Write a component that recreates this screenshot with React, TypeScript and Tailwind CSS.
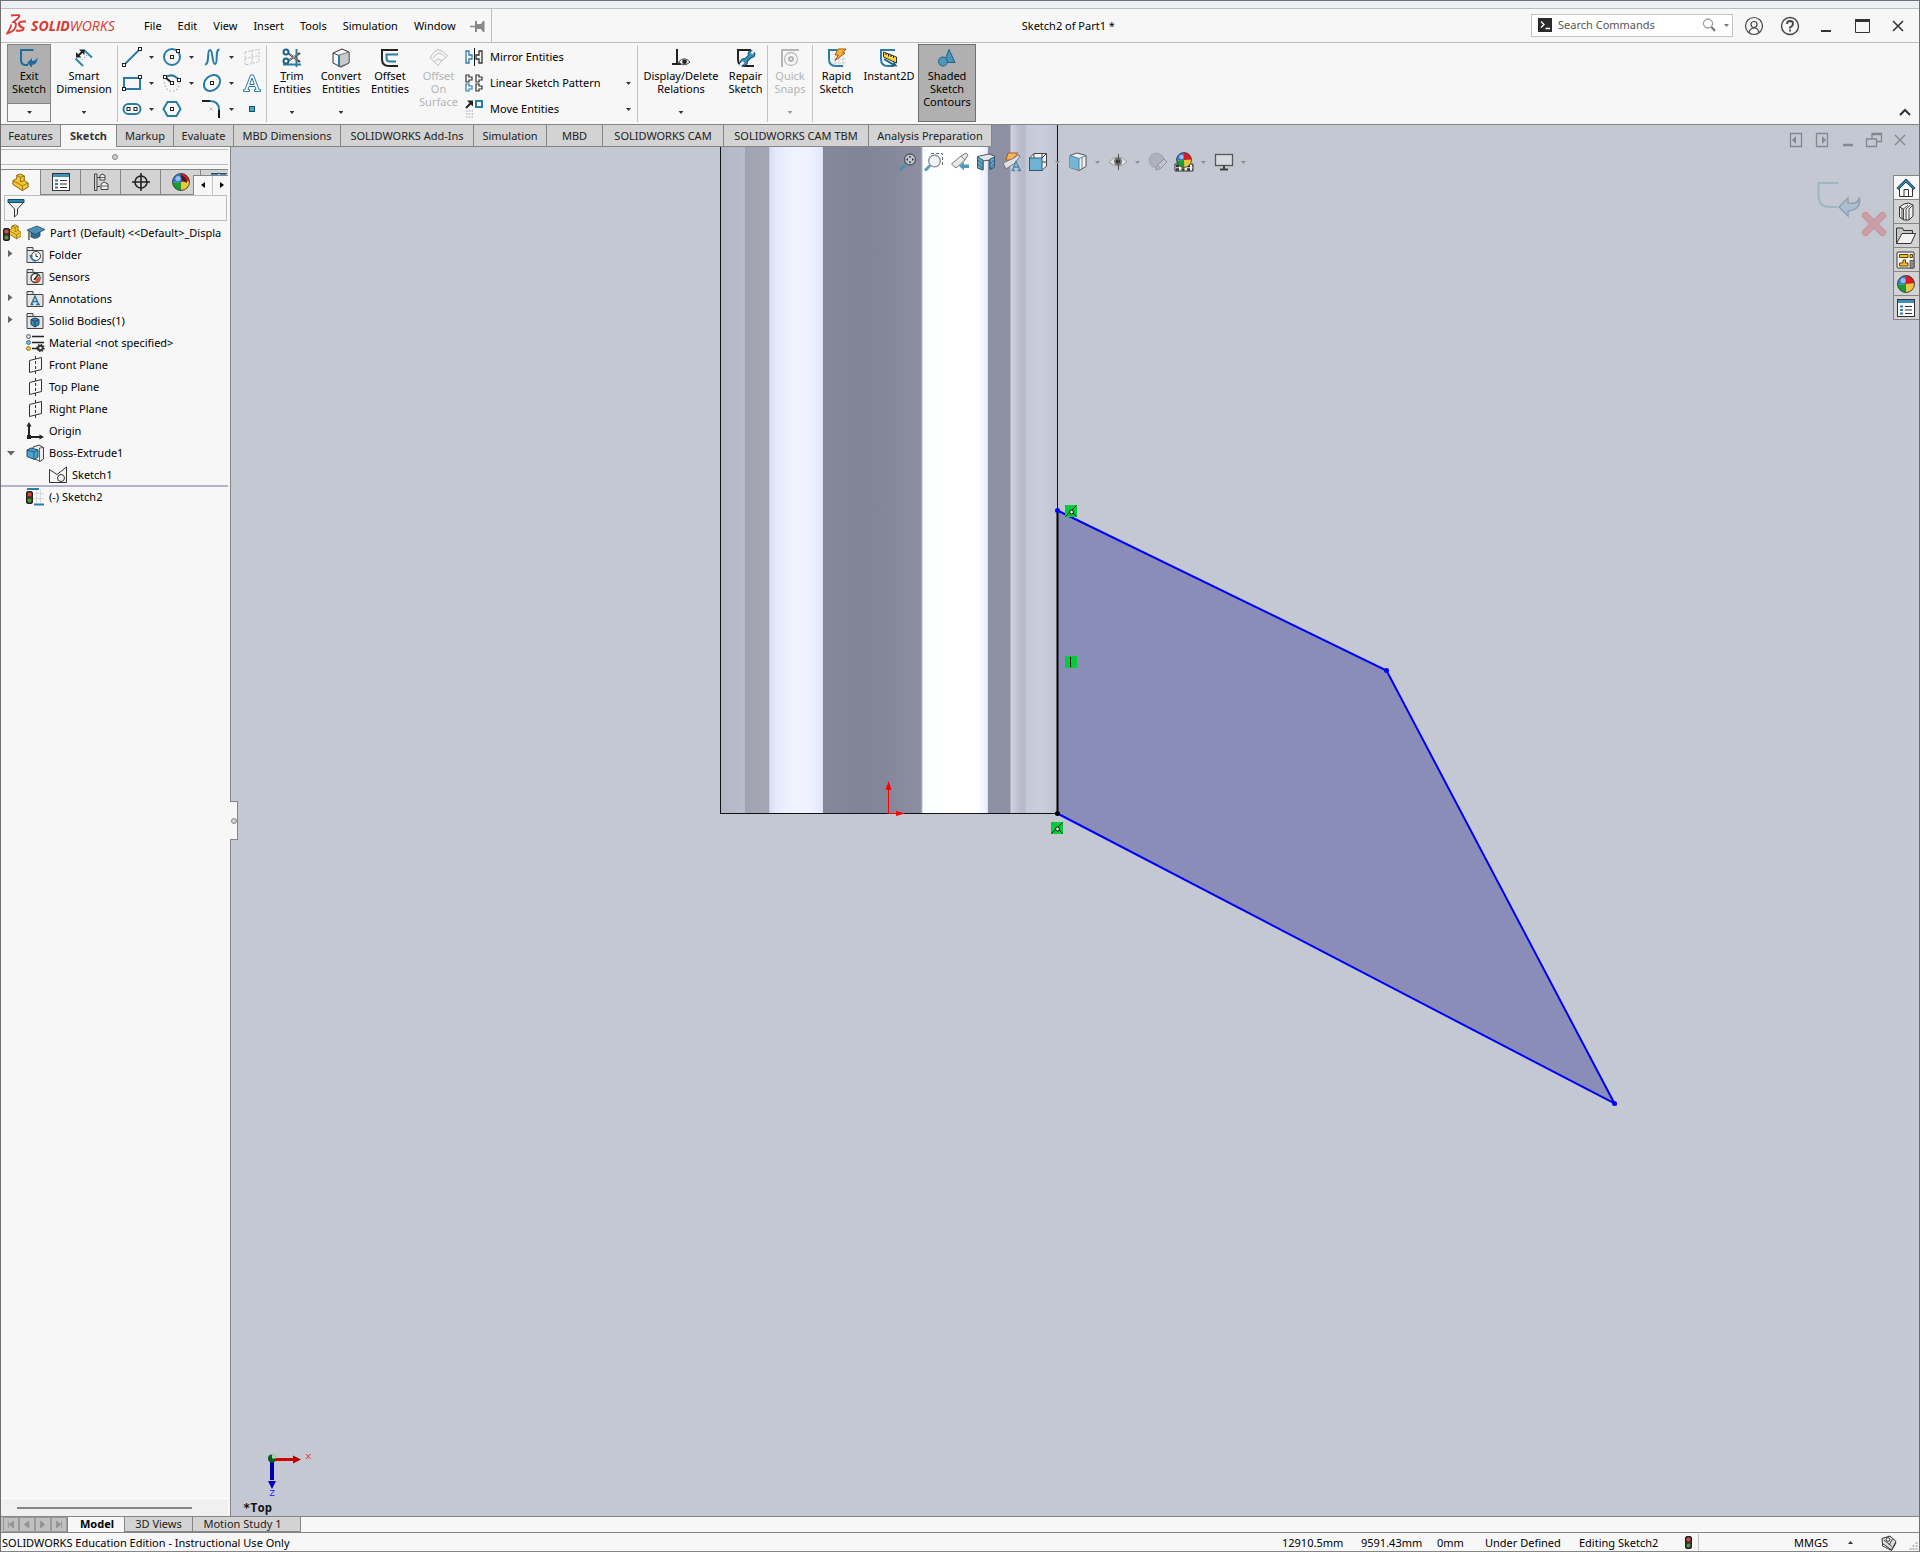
import React from "react";

const BLUE = "#2a7ba6";
const DARK = "#333638";

type SvgProps = { w?: number; h?: number; vw?: number; vh?: number; children: React.ReactNode; className?: string };

function Svg({ w = 20, h = 20, vw, vh, children, className = "" }: SvgProps) {
  return (
    <svg width={w} height={h} viewBox={`0 0 ${vw ?? w} ${vh ?? h}`} fill="none" aria-hidden="true" className={`block shrink-0 ${className}`}>
      {children}
    </svg>
  );
}

function Caret({ color = DARK, up = false }: { color?: string; up?: boolean }) {
  return (
    <Svg w={5} h={3}>
      <path d={up ? "M0 3L2.5 0L5 3Z" : "M0 0H5L2.5 3Z"} fill={color} />
    </Svg>
  );
}

/* ---------- sketch toolbar icons ---------- */

const ExitSketchIcon = () => (
  <Svg>
    <path d="M14.500 2H2V12Q2 17 7 17H9" stroke="#1c6f9c" strokeWidth="2" />
    <path d="M8 15L13 10V13Q17 13 18.500 9Q19 16 13 17V19.500Z" fill="#1c6f9c" />
  </Svg>
);
const SmartDimensionIcon = () => (
  <Svg>
    <path d="M10 2L18 9.500M1.500 10.500L9 18" stroke="#2d86b1" strokeWidth="2" />
    <path d="M4 8L9 3" stroke="#222" strokeWidth="2" />
    <path d="M10.500 1.500V7L5 1.500ZM2 9.500V4L7.500 9.500Z" fill="#222" />
    <path d="M13 7L7 13" stroke="#2d86b1" strokeWidth="1" strokeDasharray="1 2" />
  </Svg>
);
const Pt = ({ x, y }: { x: number; y: number }) => (
  <rect x={x - 1.5} y={y - 1.5} width="3" height="3" fill="#fff" stroke="#222" />
);
const LineIcon = () => (
  <Svg>
    <path d="M2 18L18 2" stroke={BLUE} strokeWidth="2" />
    <Pt x={2} y={18} /><Pt x={18} y={2} />
  </Svg>
);
const CircleIcon = () => (
  <Svg>
    <circle cx="10" cy="10" r="8" stroke={BLUE} strokeWidth="2" />
    <Pt x={10} y={10} /><Pt x={16} y={4} />
  </Svg>
);
const SplineIcon = () => (
  <Svg>
    <path d="M3 17.500C8 17.500 4.500 3 8 3S9.500 17 13 17S12.500 2.500 17.500 2.500" stroke={BLUE} strokeWidth="2" />
  </Svg>
);
const PlaneGridIcon = () => (
  <Svg>
    <path d="M3 5L17 2V15L3 18ZM3 11.500L17 8.500M10 3.500V16.500" stroke="#bdbdbd" strokeDasharray="2 1.500" />
  </Svg>
);
const RectIcon = () => (
  <Svg>
    <path d="M2 5H18V16H2Z" stroke={BLUE} strokeWidth="2" />
    <Pt x={18} y={4} /><Pt x={2} y={16} />
  </Svg>
);
const ArcIcon = () => (
  <Svg>
    <path d="M3 5Q10 -1 17 7" stroke={BLUE} strokeWidth="2" />
    <path d="M2.500 9Q3 18 10 18T17.500 9" stroke="#bbb" strokeWidth="1.500" strokeDasharray="1.500 2" />
    <path d="M4 5L10 10" stroke="#222" strokeWidth="2" />
    <Pt x={3} y={4} /><Pt x={17} y={7} /><Pt x={10} y={10} />
  </Svg>
);
const EllipseIcon = () => (
  <Svg>
    <ellipse cx="10" cy="10" rx="9" ry="7" transform="rotate(-42 10 10)" stroke={BLUE} strokeWidth="2" />
    <Pt x={10} y={10} />
  </Svg>
);
const TextIcon = () => (
  <Svg>
    <path d="M1.500 16.500H3L8.500 2H11.500L17 16.500H18.500V18.500H12.500V16.500H14L13 13.500H7L6 16.500H7.500V18.500H1.500Z" stroke={BLUE} />
    <path d="M7.700 11.500L10 5L12.300 11.500Z" stroke={BLUE} />
  </Svg>
);
const SlotIcon = () => (
  <Svg>
    <rect x="1.500" y="5" width="17" height="10" rx="5" stroke={BLUE} strokeWidth="2" />
    <Pt x={6.500} y={10} /><Pt x={13.500} y={10} />
  </Svg>
);
const PolygonIcon = () => (
  <Svg>
    <path d="M5.500 3H14.500L18.500 10L14.500 17H5.500L1.500 10Z" stroke={BLUE} strokeWidth="2" />
    <Pt x={10} y={10} />
  </Svg>
);
const FilletIcon = () => (
  <Svg>
    <path d="M0 2H8" stroke="#222" strokeWidth="2" />
    <path d="M8 2Q17 2 17 11" stroke={BLUE} strokeWidth="2" />
    <path d="M17 11V19" stroke="#111" strokeWidth="2" />
    <path d="M7.500 8.500L10.500 11.500M10.500 8.500L7.500 11.500" stroke="#bbb" />
  </Svg>
);
const PointIcon = () => (
  <Svg>
    <rect x="7.500" y="7.500" width="5" height="5" fill="#4ba4cc" stroke="#174e6c" />
  </Svg>
);
const TrimIcon = () => (
  <Svg>
    <path d="M14.500 1V19M1 16.500H19" stroke={BLUE} strokeWidth="2" />
    <path d="M6 5L18 14M6 13L18 5" stroke="#333" strokeWidth="2" />
    <path d="M7 5.500L16 12.500M7 12.500L16 6" stroke="#ddd" strokeWidth=".7" />
    <circle cx="4" cy="4" r="2.500" stroke="#1c638a" strokeWidth="2" />
    <circle cx="4" cy="13" r="2.500" stroke="#1c638a" strokeWidth="2" />
  </Svg>
);
const ConvertIcon = () => (
  <Svg>
    <path d="M2 5L11 1L18 4V15L10 19L2 15Z" fill="#f5f5f5" stroke="#333" />
    <path d="M8 7L18 4V15L8 19Z" fill="#c9c9c9" stroke="#555" strokeWidth=".7" />
    <path d="M2 5L8 7.500V19" stroke="#444" />
    <path d="M8 7V19" stroke={BLUE} strokeWidth="2" />
  </Svg>
);
const OffsetIcon = () => (
  <Svg>
    <path d="M18 2H2V11Q2 18 9 18H18" stroke="#222" strokeWidth="2" />
    <path d="M18 6.500H6.500V10Q6.500 13.500 10 13.500H16" stroke={BLUE} strokeWidth="2" />
  </Svg>
);
const OffsetSurfaceIcon = () => (
  <Svg>
    <path d="M1.500 9Q5 3 9 1.500Q15 3 18.500 8L13 12.500L9 17.500L1.500 10ZM4 10Q7 6 10 5Q14 6 16 9M5 14L9 11L13 12.500" stroke="#bcbcbc" />
  </Svg>
);
const MirrorIcon = () => (
  <Svg>
    <path d="M2 4H5V8H8V12H5V16H2Z" stroke={BLUE} strokeWidth="1.300" />
    <path d="M18 4H15V8H12V12H15V16H18Z" stroke="#333" strokeWidth="1.300" />
    <path d="M10.500 1V19" stroke="#111" />
  </Svg>
);
const PatternIcon = () => (
  <Svg>
    <path d="M2 2H5V4H8V7H5V9H2ZM12 2H15V4H18V7H15V9H12ZM12 11H15V13H18V16H15V18H12Z" stroke="#333" strokeWidth="1.200" />
    <path d="M2 11H5V13H8V16H5V18H2Z" stroke={BLUE} strokeWidth="1.200" />
  </Svg>
);
const MoveIcon = () => (
  <Svg>
    <path d="M2 9L7 4" stroke="#222" strokeWidth="2" />
    <path d="M3 1.500H9V7.500Z" fill="#222" />
    <rect x="12" y="2" width="6" height="6" stroke={BLUE} strokeWidth="2" />
    <path d="M2 12H9M2 15H9M2 18H9" stroke="#bbb" strokeWidth="1.300" strokeDasharray="1.500 1.300" />
  </Svg>
);
const RelationsIcon = () => (
  <Svg>
    <path d="M6 1V15.500M1 16H10" stroke="#222" strokeWidth="2" />
    <path d="M7.500 14Q13 7.500 19 14Q13 19.500 7.500 14Z" fill="#eee" stroke="#444" />
    <circle cx="13.500" cy="13.700" r="2.300" fill="#222" />
  </Svg>
);
const RepairIcon = () => (
  <Svg>
    <path d="M15 2H2V11Q2 18 9 18H18" stroke="#222" strokeWidth="2" />
    <path d="M7.500 14.500L16 6.500" stroke="#174e6c" strokeWidth="4.500" />
    <circle cx="15.500" cy="6" r="3.500" fill="#3c91ba" stroke="#174e6c" />
    <circle cx="8" cy="14" r="3.500" fill="#3c91ba" stroke="#174e6c" />
    <path d="M8 14L16 6" stroke="#3c91ba" strokeWidth="2.500" />
    <path d="M15.500 5.500L19 1.500M4 17.500L7.500 14" stroke="#f7f7f7" strokeWidth="2.500" />
  </Svg>
);
const SnapsIcon = () => (
  <Svg>
    <path d="M19 2H2V19" stroke="#b5b5b5" strokeWidth="2" />
    <circle cx="11" cy="11" r="6.500" stroke="#bbb" strokeWidth="1.300" />
    <circle cx="11" cy="11" r="2" stroke="#b5b5b5" strokeWidth="2" />
  </Svg>
);
const RapidIcon = () => (
  <Svg>
    <path d="M8 8V19M12 8V19M16 8V19M5 11H19M5 15H19" stroke="#d5d5d5" />
    <path d="M10 2H2V11Q2 18 9 18H16" stroke={BLUE} strokeWidth="2" />
    <path d="M11 1H19L15.500 5H18L8 12.500L11.500 7H8Z" fill="#ffb52e" stroke="#9b5412" />
  </Svg>
);
const Instant2DIcon = () => (
  <Svg>
    <path d="M16 2H2V11Q2 18 9 18H15" stroke={BLUE} strokeWidth="2" />
    <path d="M4.500 4L17.500 9V15L4.500 9Z" fill="#ffd23d" stroke="#333" />
    <path d="M7 5V7M9.500 6V8.500M12 7V9M14.500 8V10" stroke="#222" />
    <path d="M5 11L15 17" stroke="#1c638a" strokeWidth="2" />
    <path d="M18.500 18.500L12 18L15 13.500Z" fill="#1c638a" />
  </Svg>
);
const ContoursIcon = () => (
  <Svg>
    <path d="M12 1.500L18 14.500H7Z" fill="#4c94b7" stroke="#1c638a" />
    <circle cx="6" cy="13.500" r="4.500" fill="#4c94b7" fillOpacity=".9" stroke="#1c638a" />
  </Svg>
);

/* ---------- shared small drawings ---------- */

const Ball = ({ x, y, r }: { x: number; y: number; r: number }) => (
  <g transform={`translate(${x} ${y}) scale(${r})`}>
    <path d="M0 0V-1A1 1 0 0 0 -1 0.100Z" fill="#3379d8" />
    <path d="M0 0V-1A1 1 0 0 1 1 -0.050Z" fill="#d81e22" />
    <path d="M0 0L-1 0.100A1 1 0 0 0 0.050 1Z" fill="#199d32" />
    <path d="M0 0L1 -0.050A1 1 0 0 1 0.050 1Z" fill="#eec63a" />
    <circle cx="-0.350" cy="-0.400" r="0.300" fill="#fff" fillOpacity=".5" />
    <circle r="1" stroke="#333" strokeWidth=".1" fill="none" />
  </g>
);
const TrafficLight = ({ x = 0, y = 0 }: { x?: number; y?: number }) => (
  <g transform={`translate(${x} ${y})`}>
    <rect x=".500" y=".500" width="6" height="12" rx="1.500" fill="#3b3230" stroke="#222" />
    <circle cx="3.500" cy="3.500" r="2" fill="#e2463f" />
    <circle cx="3.500" cy="9.500" r="2" fill="#4c9a3a" />
  </g>
);

/* ---------- feature tree icons ---------- */

const PartShape = () => (
  <>
    <path d="M2 8L6 6V2.500L10 1L14 3V8L18 10.500V15L12 18.500L2 12Z" fill="#f6c62e" stroke="#7d5f12" />
    <path d="M2 8L12 13.500V18.500M12 13.500L18 10.500M6 2.500L10 4.500V9.500L14 8M10 4.500L14 3" stroke="#7d5f12" strokeWidth=".8" />
  </>
);
const PartIcon = () => <Svg w={19} h={19} vw={20} vh={20}><PartShape /></Svg>;
const RootPartIcon = () => (
  <Svg w={18} h={18}>
    <g transform="translate(4 0) scale(.8)"><PartShape /></g>
    <TrafficLight x={0} y={4} />
  </Svg>
);
const HatIcon = () => (
  <Svg w={20} h={18}>
    <path d="M5 8V13Q10 16 14 12V8Z" fill="#2f6c8f" stroke="#224a61" strokeWidth=".8" />
    <path d="M1 6L11 2L19 5.500L9 10.500Z" fill="#4a8fb5" stroke="#224a61" strokeWidth=".8" />
    <path d="M3 7V16" stroke="#555" strokeWidth="1.500" />
  </Svg>
);
const FolderShape = ({ children }: { children: React.ReactNode }) => (
  <Svg w={18} h={18}>
    <path d="M1 16.500V1.500H7V4.500H17V16.500Z" fill="#e3e4e6" stroke="#444" />
    <path d="M1 4.500H7" stroke="#444" />
    {children}
  </Svg>
);
const HistoryFolderIcon = () => (
  <FolderShape>
    <circle cx="10" cy="10" r="4.500" fill="#fff" stroke="#444" />
    <path d="M10 7.500V10.500H12" stroke="#333" />
    <path d="M3 9L7 9.500L5 13Z" fill={BLUE} />
    <path d="M5 10Q6 15 10 15" stroke={BLUE} strokeWidth="1.500" />
  </FolderShape>
);
const SensorsIcon = () => (
  <FolderShape>
    <circle cx="9.500" cy="10" r="4.500" fill="#fff" stroke="#333" strokeWidth="1.300" />
    <path d="M14 8V13L9.500 15V11Z" fill="#e8502f" />
    <path d="M8 12L12 7" stroke="#222" strokeWidth="1.500" />
  </FolderShape>
);
const AnnotationsIcon = () => (
  <FolderShape>
    <path d="M4.500 14.500H7.500M10 14.500H14M5.500 14L9 6L12.500 14M6.500 11.500H11" stroke="#2d6f98" strokeWidth="1.500" />
  </FolderShape>
);
const BodiesIcon = () => (
  <FolderShape>
    <path d="M5 7.500L9 6L13 7.500V12.500L9 15L5 12.500Z" fill="#3b8bb1" stroke="#16425a" />
    <path d="M5 7.500L9 9.500L13 7.500M9 9.500V15" stroke="#16425a" />
  </FolderShape>
);
const MaterialIcon = () => (
  <Svg w={20} h={18}>
    <path d="M6 2.500H18M6 8.500H18M6 14.500H13" stroke="#222" strokeWidth="1.500" />
    <circle cx="2.500" cy="2.500" r="2" fill="#ddd" stroke="#444" strokeWidth=".8" />
    <circle cx="2.500" cy="8.500" r="2" fill="#6bc1e8" stroke="#1f5f86" strokeWidth=".8" />
    <circle cx="2.500" cy="14.500" r="2" fill="#f2c42c" stroke="#7d5f12" strokeWidth=".8" />
    <circle cx="14.500" cy="14" r="2.300" stroke="#333" strokeWidth="2" fill="#eee" />
    <circle cx="14.500" cy="14" r="3.600" stroke="#333" strokeWidth="1.200" strokeDasharray="1.400 1.400" />
  </Svg>
);
const PlaneIcon = () => (
  <Svg w={18} h={18}>
    <path d="M3.500 4.500L15.500 1.500V13.500L3.500 16.500Z" stroke="#333" />
    <path d="M9.500 0V18" stroke="#333" strokeDasharray="3 2" />
  </Svg>
);
const OriginIcon = () => (
  <Svg w={18} h={18}>
    <path d="M3 3V15H15" stroke="#222" strokeWidth="2" />
    <path d="M3 0L5.500 4.500H.500ZM18 15L13.500 12.500V17.500Z" fill="#222" />
    <rect x="1" y="13" width="4" height="4" fill="#222" />
  </Svg>
);
const ExtrudeIcon = () => (
  <Svg w={18} h={18}>
    <path d="M7 3L13 1L17.500 3.500V15L14 17.500L7 14Z" fill="#ececec" stroke="#444" />
    <path d="M13.500 4V17M13.500 4L17.500 3.500" stroke="#444" strokeWidth=".8" />
    <path d="M1 6L5 4L12 6V13L8.500 15.500L1 12.500Z" fill="#4ba4cc" stroke="#174e6c" />
    <path d="M1 6L8 8L12 6M8 8V15.500" stroke="#174e6c" strokeWidth=".8" />
  </Svg>
);
const SketchIcon = () => (
  <Svg w={18} h={18}>
    <path d="M.500 16.500V3.500L8 8.500L17.500 1V16.500Z" stroke="#333" />
    <circle cx="12" cy="12" r="3.500" fill="#f7f7f7" stroke="#333" />
  </Svg>
);
const ActiveSketchIcon = () => (
  <Svg w={18} h={18}>
    <path d="M7 5.500H18M7 10.500H18M10.500 2V16M14.500 2V16" stroke="#d5d8dc" />
    <path d="M1 1H13M8 16.500H18" stroke={BLUE} strokeWidth="2" />
    <TrafficLight x={0} y={3} />
  </Svg>
);

/* ---------- manager tab icons ---------- */

const ListIcon = () => (
  <Svg w={18} h={18}>
    <rect x=".500" y=".500" width="17" height="17" fill="#fff" stroke="#333" />
    <rect x="1" y="1" width="16" height="3" fill="#3c8fb8" />
    <path d="M3 7.500H6M3 11H6M3 14.500H6" stroke={BLUE} strokeWidth="2" />
    <path d="M8 7.500H15M8 11H15M8 14.500H15" stroke="#333" />
  </Svg>
);
const ConfigIcon = () => (
  <Svg w={18} h={18}>
    <path d="M2.500 1V17.500H5V1ZM5 4.500H8M5 13.500H8" stroke="#444" />
    <path d="M8 2.500L10 1L13 2.500V7H8ZM9 11L12 9L16 11V16.500H9Z" fill="#eee" stroke="#444" />
    <path d="M8 4.500H13M9 13H16" stroke="#444" strokeWidth=".8" />
  </Svg>
);
const TargetIcon = () => (
  <Svg w={18} h={18}>
    <circle cx="9" cy="9" r="6" stroke="#222" strokeWidth="1.600" />
    <path d="M9 0V18M0 9H18" stroke="#222" strokeWidth="1.600" />
  </Svg>
);
const BallIcon = () => <Svg w={18} h={18}><Ball x={9} y={9} r={8.5} /></Svg>;
const AppearanceTabIcon = () => (
  <Svg w={18} h={18}>
    <Ball x={9} y={9} r={8.5} />
    <path d="M8 2Q15 3 15 10L11 8Z" fill="#3c2222" />
  </Svg>
);

/* ---------- heads-up view toolbar icons ---------- */

const ZoomFitIcon = () => (
  <Svg>
    <path d="M2 18L8 12" stroke="#4d8fae" strokeWidth="3" />
    <circle cx="12" cy="7.500" r="5.500" fill="#dfe1e8" fillOpacity=".7" stroke="#555" strokeWidth="1.300" />
    <path d="M12 3.500L13.500 5.500H10.500ZM12 11.500L13.500 9.500H10.500ZM8 7.500L10 6V9ZM16 7.500L14 6V9Z" fill="#333" />
  </Svg>
);
const ZoomAreaIcon = () => (
  <Svg>
    <path d="M7 1.500H18.500V13" stroke="#666" strokeDasharray="3 2" />
    <path d="M1 18.500L6 13.500" stroke="#5a9dbd" strokeWidth="3" />
    <circle cx="10.500" cy="9" r="5.800" fill="#eef3f8" stroke="#888" strokeWidth="1.300" />
  </Svg>
);
const PreviousViewIcon = () => (
  <Svg>
    <path d="M1.500 12L11 4L16 1L18 3L15 8L6 16Z" fill="#e9e9ea" stroke="#777" />
    <path d="M11 4L15 8" stroke="#888" />
    <path d="M9 14L14 10V12.500H19V16H14V18.500Z" fill="#4d9bc0" />
  </Svg>
);
const SectionIcon = () => (
  <Svg>
    <path d="M1.500 4.500L13 2L18.500 4V15L14 17.500V8L7 9V18L1.500 16Z" fill="#e3e5e9" stroke="#555" />
    <path d="M1.500 5L7 8V18L1.500 16ZM14 7L18.500 5V15L14 17.500Z" fill="#66a6c4" stroke="#2b5c76" />
    <path d="M2 8L6.500 12M2 12L6.500 16M14.500 12L18 8M14.500 16L18 12" stroke="#2b5c76" strokeWidth=".8" />
  </Svg>
);
const DynamicAnnotationIcon = () => (
  <Svg>
    <path d="M6 1H16L10 8H4Z" fill="#f9b45a" stroke="#a25d2a" />
    <path d="M1 11L12 6L16 3L18 4L13 11L4 17Z" fill="#dfe0e4" stroke="#777" />
    <path d="M9.500 18.500H13M15.500 18.500H19M10.500 18L14 9.500L18 18M11.500 15H17" stroke="#3c89b0" strokeWidth="1.300" />
  </Svg>
);
const OrientationIcon = () => (
  <Svg>
    <path d="M1.500 6L6 1.500H18.500V14L14 18.500" fill="#eef0f4" stroke="#444" />
    <path d="M6 1.500V6M14 6L18.500 1.500M14 1.500V6M14 10H18.500" stroke="#444" />
    <rect x="1.500" y="6" width="12.500" height="12.500" fill="#6fb2d2" stroke="#2b5c76" />
  </Svg>
);
const DisplayStyleIcon = () => (
  <Svg>
    <path d="M2 3.500L9 1L18 3.500V14.500L11 18.500L2 15.500Z" fill="#eef0f3" stroke="#555" />
    <path d="M2 3.500L11 6.500V18.500L2 15.500Z" fill="#74b6d5" />
    <path d="M2 3.500L11 6.500L18 3.500M11 6.500V18.500M14 5.500V16.500" stroke="#4d6b7c" strokeWidth=".8" />
  </Svg>
);
const EyeIcon = () => (
  <Svg>
    <path d="M1 10Q10 0 19 10Q10 18 1 10Z" fill="#e4e5e8" stroke="#999" />
    <circle cx="10" cy="9.500" r="4" fill="#777" />
    <circle cx="10" cy="9.500" r="2" fill="#222" />
    <path d="M10.500 2V18" stroke="#555" />
  </Svg>
);
const EditAppearanceIcon = () => (
  <Svg>
    <circle cx="8.500" cy="8.500" r="7.500" fill="#afb2bc" stroke="#a3a7b1" />
    <path d="M8 18L9.500 13L16 7L19 10L12.500 16.500ZM9.500 13L12.500 16.500" fill="#c2c5cf" stroke="#8d909a" />
  </Svg>
);
const SceneIcon = () => (
  <Svg>
    <path d="M1 12H19V19H1Z" fill="#eee" stroke="#333" />
    <path d="M2 14H19M2 17.500H19" stroke="#333" strokeWidth="2.500" strokeDasharray="3 2.500" />
    <Ball x={10} y={8} r={7.5} />
  </Svg>
);
const MonitorIcon = () => (
  <Svg>
    <rect x="1.500" y="2.500" width="17" height="11" fill="#d7dae0" stroke="#555" strokeWidth="1.300" />
    <path d="M10 14V17.500M6 17.500H14" stroke="#444" strokeWidth="2" />
  </Svg>
);

/* ---------- task pane icons ---------- */

const HomeIcon = () => (
  <Svg>
    <path d="M3.500 10V18.500H16.500V10L10 4Z" fill="#fff" stroke="#333" />
    <path d="M8 18V11.500H12.500V18" stroke="#333" />
    <path d="M1.500 11L10 2.500L18.500 11" stroke="#174e6c" strokeWidth="3" />
    <path d="M2 10.500L10 2.800L18 10.500" stroke="#55abd1" strokeWidth="1" />
  </Svg>
);
const LibraryIcon = () => (
  <Svg>
    <path d="M3.500 5L8 2L12.500 1L17 3V14L13 18H8L3.500 15Z" fill="#eee" stroke="#333" />
    <path d="M3.500 5L7.500 7V18M7.500 7L12 3M10 7V18M10 7L14.500 3M13 7V18M13 7L17 3M6 6V17" stroke="#333" strokeWidth=".9" />
  </Svg>
);
const FolderOpenIcon = () => (
  <Svg>
    <path d="M.500 17.500V2H6.500L7.500 4.500H16.500V8" fill="#c5c5c5" stroke="#333" />
    <path d="M.500 17.500L6 7.500H19.500L15 17.500Z" fill="#f3f3f3" stroke="#333" />
  </Svg>
);
const ViewPaletteIcon = () => (
  <Svg>
    <rect x="1" y="2" width="17" height="16" rx="1" fill="#f5f5f5" stroke="#333" />
    <path d="M3.500 4.500H12V7.500H3.500ZM14 4.500H16.500V7.500H14ZM7 10H9.500V13H12V16H3.500V13H7Z" fill="#f6c22c" stroke="#5c4400" />
    <rect x="14" y="10.500" width="4" height="7.500" fill="#8c8c8c" stroke="#444" strokeWidth=".7" />
  </Svg>
);

/* ---------- building blocks ---------- */

type ToolProps = { icon: React.ReactNode; lines: React.ReactNode[]; width: string; arrow?: boolean; disabled?: boolean; active?: boolean };

function Tool({ icon, lines, width, arrow, disabled, active }: ToolProps) {
  return (
    <button
      type="button"
      disabled={disabled}
      className={`relative mt-px flex h-[78px] flex-col items-center pt-1 leading-[13px] ${width} ${disabled ? "text-[#b4b4b4]" : "text-black"} ${active ? "bg-[#b0b0b0] outline outline-1 -outline-offset-1 outline-[#707070]" : ""}`}
    >
      {icon}
      <span className="mt-px flex flex-col items-center whitespace-nowrap">
        {lines.map((l, i) => <span key={i}>{l}</span>)}
      </span>
      {arrow && <span className="absolute bottom-2 left-1/2 -translate-x-1/2"><Caret color={disabled ? "#999" : DARK} /></span>}
    </button>
  );
}

const Sep = () => <div className="mt-0.5 h-[77px] w-px shrink-0 bg-[#c3c3c3]" />;

const sketchTools: { name: string; icon: React.ReactNode; arrow?: boolean }[] = [
  { name: "Line", icon: <LineIcon />, arrow: true },
  { name: "Circle", icon: <CircleIcon />, arrow: true },
  { name: "Spline", icon: <SplineIcon />, arrow: true },
  { name: "Plane", icon: <PlaneGridIcon /> },
  { name: "Corner Rectangle", icon: <RectIcon />, arrow: true },
  { name: "Centerpoint Arc", icon: <ArcIcon />, arrow: true },
  { name: "Ellipse", icon: <EllipseIcon />, arrow: true },
  { name: "Text", icon: <TextIcon /> },
  { name: "Slot", icon: <SlotIcon />, arrow: true },
  { name: "Polygon", icon: <PolygonIcon /> },
  { name: "Sketch Fillet", icon: <FilletIcon />, arrow: true },
  { name: "Point", icon: <PointIcon /> },
];

const ribbonTabs: { label: string; width: string; active?: boolean }[] = [
  { label: "Features", width: "w-[60px]" },
  { label: "Sketch", width: "w-[56px]", active: true },
  { label: "Markup", width: "w-[57px]" },
  { label: "Evaluate", width: "w-[60px]" },
  { label: "MBD Dimensions", width: "w-[107px]" },
  { label: "SOLIDWORKS Add-Ins", width: "w-[133px]" },
  { label: "Simulation", width: "w-[73px]" },
  { label: "MBD", width: "w-[56px]" },
  { label: "SOLIDWORKS CAM", width: "w-[121px]" },
  { label: "SOLIDWORKS CAM TBM", width: "w-[145px]" },
  { label: "Analysis Preparation", width: "w-[123px]" },
];

const treeItems: { label: string; icon: React.ReactNode; state?: "closed" | "open"; indent?: boolean }[] = [
  { label: "Folder", icon: <HistoryFolderIcon />, state: "closed" },
  { label: "Sensors", icon: <SensorsIcon /> },
  { label: "Annotations", icon: <AnnotationsIcon />, state: "closed" },
  { label: "Solid Bodies(1)", icon: <BodiesIcon />, state: "closed" },
  { label: "Material <not specified>", icon: <MaterialIcon /> },
  { label: "Front Plane", icon: <PlaneIcon /> },
  { label: "Top Plane", icon: <PlaneIcon /> },
  { label: "Right Plane", icon: <PlaneIcon /> },
  { label: "Origin", icon: <OriginIcon /> },
  { label: "Boss-Extrude1", icon: <ExtrudeIcon />, state: "open" },
  { label: "Sketch1", icon: <SketchIcon />, indent: true },
];

function MenuBar() {
  return (
    <header className="relative flex h-[34px] items-center border-b border-[#bdbdbd] pt-px">
      <div className="flex w-[135px] items-center gap-1 pl-[5px] font-['Open_Sans',sans-serif] text-[14px] italic text-[#da3830]">
        <Svg w={21} h={21} className="-mt-1">
          <path d="M5 1.500Q9 .800 13 1.200Q14.500 3 7.500 8Q11 8.500 9.500 13Q8 17.500 1.200 19.500Q4 15 5.500 10.500" stroke="#da3830" strokeWidth="1.800" />
          <path d="M20 7.500Q12.500 7 13 10T17.500 14Q18 17.500 10 16.500" stroke="#da3830" strokeWidth="2" />
        </Svg>
        <span><b>SOLID</b>WORKS</span>
      </div>
      <nav className="flex items-center self-stretch" aria-label="Main menu">
        {["File", "Edit", "View", "Insert", "Tools", "Simulation", "Window"].map((m) => (
          <button key={m} type="button" className="px-2">{m}</button>
        ))}
      </nav>
      <button type="button" aria-label="Pin menu" className="ml-1.5 mr-1.5">
        <Svg w={15} h={11}>
          <path d="M0 5.500H6" stroke="#888" strokeWidth="1.500" />
          <path d="M5 0H7V3H11L13 0H14.500V11H13L11 8H7V11H5Z" fill="#888" />
        </Svg>
      </button>
      <div className="-mt-px w-px self-stretch bg-[#bdbdbd]" />
      <h1 className="flex-1 pl-[114px] text-center">Sketch2 of Part1 *</h1>
      <div className="-mt-0.5 flex h-[23px] w-[202px] items-center border border-[#c2c3cb] bg-white pl-1.5 pr-0.5">
        <Svg w={14} h={14}>
          <rect width="14" height="14" fill="#2b2b2b" />
          <path d="M3 3.500L6 6.500L3 9.500M7.500 10.500H12" stroke="#fff" strokeWidth="1.300" />
        </Svg>
        <input aria-label="Search Commands" placeholder="Search Commands" className="ml-1.5 w-0 flex-1 bg-transparent text-[11px] outline-none placeholder:text-[#555]" />
        <Svg w={14} h={14}>
          <circle cx="6" cy="5.500" r="4.500" stroke="#777" />
          <path d="M9.500 9L13 13" stroke="#777" strokeWidth="2" />
        </Svg>
        <span className="ml-2 mr-px"><Caret color="#777" /></span>
      </div>
      <button type="button" aria-label="Account" className="ml-[11px]">
        <Svg>
          <circle cx="10" cy="10" r="8.500" stroke="#444" strokeWidth="1.200" />
          <circle cx="10" cy="8.500" r="3" stroke="#444" strokeWidth="1.200" />
          <path d="M5 16.500Q6 12 10 12T15 16.500" stroke="#444" strokeWidth="1.200" />
        </Svg>
      </button>
      <button type="button" aria-label="Help" className="ml-4">
        <Svg>
          <circle cx="10" cy="10" r="8.500" stroke="#444" strokeWidth="1.400" />
          <path d="M7 8Q7 5 10 5T13 7.500T10 11.500V12.500M10 13.500V15.500" stroke="#444" strokeWidth="1.800" />
        </Svg>
      </button>
      <button type="button" aria-label="Minimize" className="ml-4">
        <Svg><path d="M5 15H15" stroke="#333" strokeWidth="2" /></Svg>
      </button>
      <button type="button" aria-label="Maximize" className="ml-4">
        <Svg><path d="M3.500 4H17.500V16.500H3.500Z" stroke="#333" /><path d="M3 4.500H18" stroke="#333" strokeWidth="3" /></Svg>
      </button>
      <button type="button" aria-label="Close" className="ml-4 mr-[11px]">
        <Svg><path d="M5 5L15 15M15 5L5 15" stroke="#333" strokeWidth="1.600" /></Svg>
      </button>
    </header>
  );
}

function Ribbon() {
  return (
    <div className="flex h-[82px] border-b border-[#858585] pl-1.5">
      <div className="mt-px flex h-[78px] w-11 flex-col border border-[#858585]">
        <button type="button" className="flex h-[58px] flex-col items-center bg-[#b0b0b0] pt-[3px] leading-[13px]">
          <ExitSketchIcon />
          <span className="mt-px">Exit</span>
          <span>Sketch</span>
        </button>
        <button type="button" aria-label="Exit Sketch options" className="flex flex-1 items-center justify-center border-t border-[#858585]">
          <Caret />
        </button>
      </div>
      <Tool icon={<SmartDimensionIcon />} lines={["Smart", "Dimension"]} width="w-[66px]" arrow />
      <Sep />
      <div className="mt-px grid w-[148px] grid-cols-[40px_40px_40px_28px] grid-rows-[26px_26px_26px]">
        {sketchTools.map((t) => (
          <button key={t.name} type="button" aria-label={t.name} className="flex items-center gap-[7px] pl-1">
            {t.icon}
            {t.arrow && <Caret />}
          </button>
        ))}
      </div>
      <Sep />
      <Tool icon={<TrimIcon />} lines={[<><u>T</u>rim</>, "Entities"]} width="w-[50px]" arrow />
      <Tool icon={<ConvertIcon />} lines={["Convert", "Entities"]} width="w-12" arrow />
      <Tool icon={<OffsetIcon />} lines={["Offset", "Entities"]} width="w-[50px]" />
      <Tool icon={<OffsetSurfaceIcon />} lines={["Offset", "On", "Surface"]} width="w-[47px]" disabled />
      <div className="mt-px flex w-[175px] flex-col">
        {[
          { label: "Mirror Entities", icon: <MirrorIcon />, arrow: false },
          { label: "Linear Sketch Pattern", icon: <PatternIcon />, arrow: true },
          { label: "Move Entities", icon: <MoveIcon />, arrow: true },
        ].map((t) => (
          <button key={t.label} type="button" className="flex h-[26px] items-center gap-1.5 pl-0.5 pr-1.5">
            {t.icon}
            <span className="flex-1 whitespace-nowrap text-left">{t.label}</span>
            {t.arrow && <Caret />}
          </button>
        ))}
      </div>
      <Sep />
      <Tool icon={<RelationsIcon />} lines={["Display/Delete", "Relations"]} width="w-[86px]" arrow />
      <Tool icon={<RepairIcon />} lines={["Repair", "Sketch"]} width="w-[43px]" />
      <Sep />
      <Tool icon={<SnapsIcon />} lines={["Quick", "Snaps"]} width="w-[44px]" arrow disabled />
      <Sep />
      <Tool icon={<RapidIcon />} lines={["Rapid", "Sketch"]} width="w-[47px]" />
      <Tool icon={<Instant2DIcon />} lines={["Instant2D"]} width="w-[58px]" />
      <Tool icon={<ContoursIcon />} lines={["Shaded", "Sketch", "Contours"]} width="w-[58px]" active />
      <button type="button" aria-label="Collapse ribbon" className="mb-2 ml-auto mr-2 self-end">
        <Svg w={12} h={8}><path d="M1 7L6 2L11 7" stroke="#333" strokeWidth="2" /></Svg>
      </button>
    </div>
  );
}

function FeatureManager() {
  const tabs = [
    { name: "FeatureManager", icon: <PartIcon /> },
    { name: "PropertyManager", icon: <ListIcon /> },
    { name: "ConfigurationManager", icon: <ConfigIcon /> },
    { name: "DimXpertManager", icon: <TargetIcon /> },
    { name: "DisplayManager", icon: <AppearanceTabIcon /> },
  ];
  return (
    <aside className="relative flex w-[230px] shrink-0 flex-col border-r border-[#858585] bg-[#f7f7f7] pr-0.5 pt-0.5">
      <div className="flex h-4 items-center justify-center border-y border-[#bdbdbd]">
        <span className="size-1.5 rounded-full border border-[#888] bg-[#d0d0d0]" />
      </div>
      <div className="relative mt-1 flex h-[26px] border-t border-[#858585] bg-[#d3d3d3]" role="tablist" aria-label="Managers">
        {tabs.map((t, i) => (
          <button
            key={t.name}
            type="button"
            role="tab"
            aria-label={t.name}
            aria-selected={i === 0}
            className={`flex w-10 shrink-0 items-center justify-center border-r border-[#858585] ${i === 0 ? "bg-[#f7f7f7]" : "border-b"}`}
          >
            {t.icon}
          </button>
        ))}
        <span className="flex-1 border-b border-[#858585] pl-2.5 pt-0.5">
          <Svg w={16} h={4}><path d="M0 1.500H16" stroke="#24506a" strokeWidth="1" /><path d="M0 3H7M9 3H15" stroke="#3c8fb8" strokeWidth="2" /></Svg>
        </span>
        <div className="absolute bottom-0 right-0 flex h-5 border-l border-t border-[#858585] bg-[#f7f7f7]">
          <button type="button" aria-label="Scroll tabs left" className="flex w-[19px] items-center justify-center border-r border-[#c3c3c3] pb-0.5">
            <Svg w={4} h={6}><path d="M4 0V6L0 3Z" fill="#000" /></Svg>
          </button>
          <button type="button" aria-label="Scroll tabs right" className="flex w-[15px] items-center justify-center pb-0.5 pl-0.5">
            <Svg w={4} h={6}><path d="M0 0V6L4 3Z" fill="#000" /></Svg>
          </button>
        </div>
      </div>
      <div className="ml-[3px] mr-px flex h-[26px] items-center border border-[#bdbdbd] pl-0.5">
        <Svg w={18} h={20}>
          <path d="M1 4L7.500 11V19L10.500 16V11L17 4Z" fill="#eee" stroke="#333" />
          <path d="M1 1.500H17V4.500H1Z" fill="#2f85b0" stroke="#174e6c" />
        </Svg>
        <input aria-label="Filter tree" className="h-5 w-0 flex-1 bg-transparent outline-none" />
      </div>
      <ul className="flex-1 pt-px">
        <li className="flex h-[22px] items-center whitespace-nowrap pl-0.5">
          <RootPartIcon />
          <span className="ml-[5px] mr-1"><HatIcon /></span>
          Part1 (Default) &lt;&lt;Default&gt;_Displa
        </li>
        {treeItems.map((t) => (
          <li key={t.label} className={`flex h-[22px] items-center whitespace-nowrap ${t.indent ? "pl-[23px]" : ""}`}>
            <span className="flex w-[25px] items-center pl-[7px]">
              {t.state === "closed" && <Svg w={5} h={7} className="-mt-1"><path d="M0 0L4.500 3.500L0 7Z" fill="#666" /></Svg>}
              {t.state === "open" && <Svg w={8} h={5} className="-ml-px"><path d="M0 0H8L4 4.500Z" fill="#666" /></Svg>}
            </span>
            <span className="flex w-[23px]">{t.icon}</span>
            {t.label}
          </li>
        ))}
        <li className="-mt-px flex h-[22px] items-center border-t-2 border-[#b3b3cc] pl-[25px]">
          <span className="flex w-[23px]"><ActiveSketchIcon /></span>
          (-) Sketch2
        </li>
      </ul>
      <div className="flex h-[18px] items-center border-t border-white bg-[#f0f0f0] pl-4">
        <div className="h-0.5 w-[175px] bg-[#858585]" />
      </div>
      <div className="absolute left-full top-[654px] flex h-[39px] w-2 items-center justify-center border border-l-0 border-[#858585] bg-[#f7f7f7]">
        <span className="size-1.5 shrink-0 rounded-full border border-[#888] bg-[#d0d0d0]" />
      </div>
    </aside>
  );
}

const CoincidentMark = ({ x, y }: { x: number; y: number }) => (
  <g transform={`translate(${x} ${y})`}>
    <rect width="12" height="12" fill="#00cd37" />
    <path d="M11.500 .500L.500 11.500M7 7L11.500 11.500" stroke="#111" />
    <circle cx="6.500" cy="7" r="2" fill="#bfe8c8" stroke="#222" />
  </g>
);

function ModelDrawing() {
  return (
    <svg className="absolute inset-0 h-full w-full" role="img" aria-label="Extruded cylinder with an open fin sketch">
      <defs>
        <linearGradient id="body" gradientUnits="userSpaceOnUse" x1="721" x2="1059" y1="0" y2="0">
          <stop offset="0" stopColor="#b4b8c6" /><stop offset=".071" stopColor="#b9bccb" />
          <stop offset=".071" stopColor="#a1a4b0" /><stop offset=".135" stopColor="#a4a6b4" />
          <stop offset=".142" stopColor="#9fa2af" /><stop offset=".144" stopColor="#d9def2" />
          <stop offset=".165" stopColor="#e6eafd" /><stop offset=".22" stopColor="#f0f4ff" /><stop offset=".26" stopColor="#eff2ff" />
          <stop offset=".300" stopColor="#e4e8fe" /><stop offset=".303" stopColor="#85889a" />
          <stop offset=".43" stopColor="#808496" /><stop offset=".592" stopColor="#8c8ea2" />
          <stop offset=".598" stopColor="#f8fdff" /><stop offset=".65" stopColor="#ffffff" />
          <stop offset=".76" stopColor="#ffffff" /><stop offset=".788" stopColor="#eaedff" />
          <stop offset=".791" stopColor="#8c90a1" /><stop offset=".855" stopColor="#8e91a3" />
          <stop offset=".858" stopColor="#d2d3e2" /><stop offset=".88" stopColor="#bcbdcd" />
          <stop offset=".900" stopColor="#b6b9c7" /><stop offset=".902" stopColor="#c5c8d7" />
          <stop offset=".95" stopColor="#cacddc" /><stop offset="1" stopColor="#c0c4cf" />
        </linearGradient>
      </defs>
      <g transform="translate(-1 -125)">
        <rect x="720.500" y="120" width="337" height="693.500" fill="url(#body)" stroke="#111" />
        <path d="M1057.500 510.500L1386.500 670.500L1614.500 1103.500L1057.500 813.500Z" fill="#8b8db9" />
        <path d="M1057.500 510.500L1386.500 670.500L1614.500 1103.500L1057.500 813.500" fill="none" stroke="#0000f5" strokeWidth="2" />
        <path d="M1057.500 511V813" stroke="#000" strokeWidth="2" />
        <circle cx="1057.500" cy="510.500" r="2.500" fill="#00f" />
        <circle cx="1386.500" cy="670.500" r="2.500" fill="#00f" />
        <circle cx="1614.500" cy="1103.500" r="2.500" fill="#00f" />
        <circle cx="1057.500" cy="813.500" r="2.500" fill="#000" />
        <path d="M888.500 790V813.500H896" fill="none" stroke="#f00" />
        <path d="M888.500 781L891.500 790H885.500ZM905 813.500L896 811V816Z" fill="#f00" />
        <CoincidentMark x={1065} y={505} />
        <CoincidentMark x={1051} y={822} />
        <rect x="1065" y="656" width="12" height="12" fill="#00cd37" />
        <path d="M1070.500 657V667" stroke="#000" />
      </g>
    </svg>
  );
}

function HeadsUpToolbar() {
  const items: { name: string; icon: React.ReactNode; arrow?: boolean }[] = [
    { name: "Zoom to Fit", icon: <ZoomFitIcon /> },
    { name: "Zoom to Area", icon: <ZoomAreaIcon /> },
    { name: "Previous View", icon: <PreviousViewIcon /> },
    { name: "Section View", icon: <SectionIcon /> },
    { name: "Dynamic Annotation Views", icon: <DynamicAnnotationIcon /> },
    { name: "View Orientation", icon: <OrientationIcon />, arrow: true },
    { name: "Display Style", icon: <DisplayStyleIcon />, arrow: true },
    { name: "Hide/Show Items", icon: <EyeIcon />, arrow: true },
    { name: "Edit Appearance", icon: <EditAppearanceIcon /> },
    { name: "Apply Scene", icon: <SceneIcon />, arrow: true },
    { name: "View Settings", icon: <MonitorIcon />, arrow: true },
  ];
  return (
    <div className="flex justify-center gap-1.5 pr-1 pt-[5px]">
      {items.map((t) => (
        <button key={t.name} type="button" aria-label={t.name} className="flex items-center gap-[7px]">
          {t.icon}
          {t.arrow && <span className="mr-0.5"><Caret color="#8b8e98" /></span>}
        </button>
      ))}
    </div>
  );
}

function Viewport() {
  const pane = [
    { name: "Resources", icon: <HomeIcon /> },
    { name: "Design Library", icon: <LibraryIcon /> },
    { name: "File Explorer", icon: <FolderOpenIcon /> },
    { name: "View Palette", icon: <ViewPaletteIcon /> },
    { name: "Appearances", icon: <BallIcon /> },
    { name: "Custom Properties", icon: <ListIcon /> },
  ];
  return (
    <main className="relative min-w-0 flex-1">
      <HeadsUpToolbar />
      <div className="absolute right-[57px] top-[34px] opacity-60">
        <Svg w={46} h={37}>
          <path d="M22.500 2H2.500V14Q2.500 26 14 26H21" stroke="#8ab" strokeWidth="2" />
          <path d="M23 26L32 17V22Q42 24 43.500 16.500Q45 29 32 30V35Z" fill="#9fbccd" stroke="#6589a0" strokeWidth="1.500" />
        </Svg>
      </div>
      <div className="absolute right-[32px] top-[64px]">
        <Svg w={26} h={26}>
          <path d="M4.500 4.500L21.500 21.500M21.500 4.500L4.500 21.500" stroke="#c98f97" strokeWidth="7" strokeLinecap="round" />
          <path d="M4.500 4.500L21.500 21.500M21.500 4.500L4.500 21.500" stroke="#cb9fa6" strokeWidth="5" strokeLinecap="round" />
        </Svg>
      </div>
      <div className="absolute right-0 top-7 flex w-[26px] flex-col border border-r-0 border-[#858585]">
        {pane.map((p, i) => (
          <button key={p.name} type="button" aria-label={p.name} className={`flex items-center justify-center pr-px ${i === 0 ? "h-[23px] bg-[#f7f7f7]" : "h-6 border-t border-[#858585] bg-[#d3d3d3]"}`}>
            {p.icon}
          </button>
        ))}
      </div>
      <div className="absolute bottom-0 left-3">
        <Svg w={72} h={50} className="ml-5">
          <path d="M9 9.500H30" stroke="#d40000" strokeWidth="3" />
          <path d="M38 9.500L30 5.500V13.500Z" fill="#b40000" />
          <path d="M9 9V30" stroke="#0000a8" strokeWidth="4" />
          <path d="M9 39L5 31H13Z" fill="#0000b8" />
          <circle cx="9" cy="8.500" r="4" fill="#0a5c1a" />
          <path d="M9 8.500V4.500A4 4 0 0 1 13 8.500Z" fill="#a5e0a8" />
          <path d="M43 4L47.500 9M47.500 4L43 9" stroke="#f22" />
          <path d="M7 40.500H11.500L7 45.500H11.500" stroke="#33f" />
        </Svg>
        <div className="font-['DejaVu_Sans_Mono',monospace] text-[12px] font-bold leading-4 text-[#111]">*Top</div>
      </div>
    </main>
  );
}

function DocumentControls() {
  return (
    <div className="ml-auto mr-[9px] flex items-center gap-1.5 pt-2">
      {[
        { n: "Previous pane", d: "M4.500 3.500H15.500V16.500H4.500Z", f: "M10 6V14L6 10Z" },
        { n: "Next pane", d: "M4.500 3.500H15.500V16.500H4.500Z", f: "M10 6V14L14 10Z" },
        { n: "Minimize document", d: "M5 14.500H15M5 15.500H15", f: "" },
        { n: "Restore document", d: "M2.500 9H12.500V16.500H2.500ZM8 8.500V3.500H17.500V11.500H13M8 4.500H17.500", f: "" },
        { n: "Close document", d: "M5 5L15 15M15 5L5 15", f: "" },
      ].map((b) => (
        <button key={b.n} type="button" aria-label={b.n}>
          <Svg>
            <path d={b.d} stroke="#85878f" strokeWidth="1.300" />
            {b.f && <path d={b.f} fill="#85878f" />}
          </Svg>
        </button>
      ))}
    </div>
  );
}

function BottomBar() {
  return (
    <>
      <div className="flex h-4 border-t border-[#858585] leading-[13px]">
        <div className="flex border-r border-[#858585] bg-[#c0c0c0] pl-0.5">
          {["M5 3V11M11 3L6 7L11 11Z", "M10 3L5 7L10 11Z", "M5 3L10 7L5 11Z", "M11 3V11M5 3L10 7L5 11Z"].map((d, i) => (
            <button key={i} type="button" disabled aria-label={["First tab", "Previous tab", "Next tab", "Last tab"][i]} className="flex w-4 items-center justify-center border border-[#999]">
              <Svg w={14} h={13} vw={16} vh={14}><path d={d} fill="#929292" stroke="#929292" /></Svg>
            </button>
          ))}
        </div>
        <button type="button" className="w-14 pb-0.5 pl-0.5 font-bold">Model</button>
        <button type="button" className="w-[69px] border-x border-b border-[#858585] bg-[#d3d3d3] pb-px text-[#222]">3D Views</button>
        <button type="button" className="w-[108px] border-b border-r border-[#858585] bg-[#d3d3d3] pb-px pr-2 text-[#222]">Motion Study 1</button>
      </div>
      <footer className="flex h-5 items-center border-y border-[#858585] pl-px pt-px">
        <span className="flex-1">SOLIDWORKS Education Edition - Instructional Use Only</span>
        <span className="w-[79px]">12910.5mm</span>
        <span className="w-[76px]">9591.43mm</span>
        <span className="w-12">0mm</span>
        <span className="w-[94px]">Under Defined</span>
        <span className="w-[106px]">Editing Sketch2</span>
        <Svg w={7} h={13}><TrafficLight /></Svg>
        <span className="ml-1.5 h-full w-px bg-[#c3c3c3]" />
        <button type="button" className="ml-[95px] flex items-center gap-5">MMGS <Caret up /></button>
        <button type="button" aria-label="Tags" className="ml-7">
          <Svg w={16} h={16}>
            <path d="M1 3.500L9 1L15 6.500L10.500 15L1.500 8.500Z" fill="#ddd" stroke="#333" />
            <path d="M1.500 8.500V11L10.500 15.500L15 8M3 5L11 11.500M11.500 4L8 10" stroke="#333" strokeWidth=".9" />
            <circle cx="7" cy="4.500" r="1.800" fill="#fff" stroke="#333" />
          </Svg>
        </button>
        <Svg w={9} h={9} className="ml-3 mr-px mt-2">
          <path d="M7.500 0V2M4.500 3V5M7.500 3V5M1.500 6V8M4.500 6V8M7.500 6V8" stroke="#bbb" strokeWidth="2" />
        </Svg>
      </footer>
    </>
  );
}

export default function App() {
  return (
    <div className="flex min-h-screen flex-col border-x border-t border-[#6f6f6f] bg-[#f7f7f7] font-['Noto_Sans','Open_Sans',sans-serif] text-[11px] leading-4 text-black">
      <div className="h-2 border-b border-[#bdbdbd] bg-[#eef0f8]" />
      <MenuBar />
      <Ribbon />
      <div className="relative flex flex-1 flex-col overflow-hidden bg-[#c4c8d3]">
        <ModelDrawing />
        <div className="relative flex h-[22px]">
          <div className="flex" role="tablist" aria-label="CommandManager">
            {ribbonTabs.map((t) => (
              <button
                key={t.label}
                type="button"
                role="tab"
                aria-selected={!!t.active}
                className={`whitespace-nowrap border-r border-[#858585] ${t.width} ${t.active ? "bg-[#f7f7f7] pb-px font-bold text-[#333]" : "border-b bg-[#d3d3d3] text-[#222]"}`}
              >
                {t.label}
              </button>
            ))}
          </div>
          <DocumentControls />
        </div>
        <div className="relative flex flex-1">
          <FeatureManager />
          <Viewport />
        </div>
      </div>
      <BottomBar />
    </div>
  );
}
